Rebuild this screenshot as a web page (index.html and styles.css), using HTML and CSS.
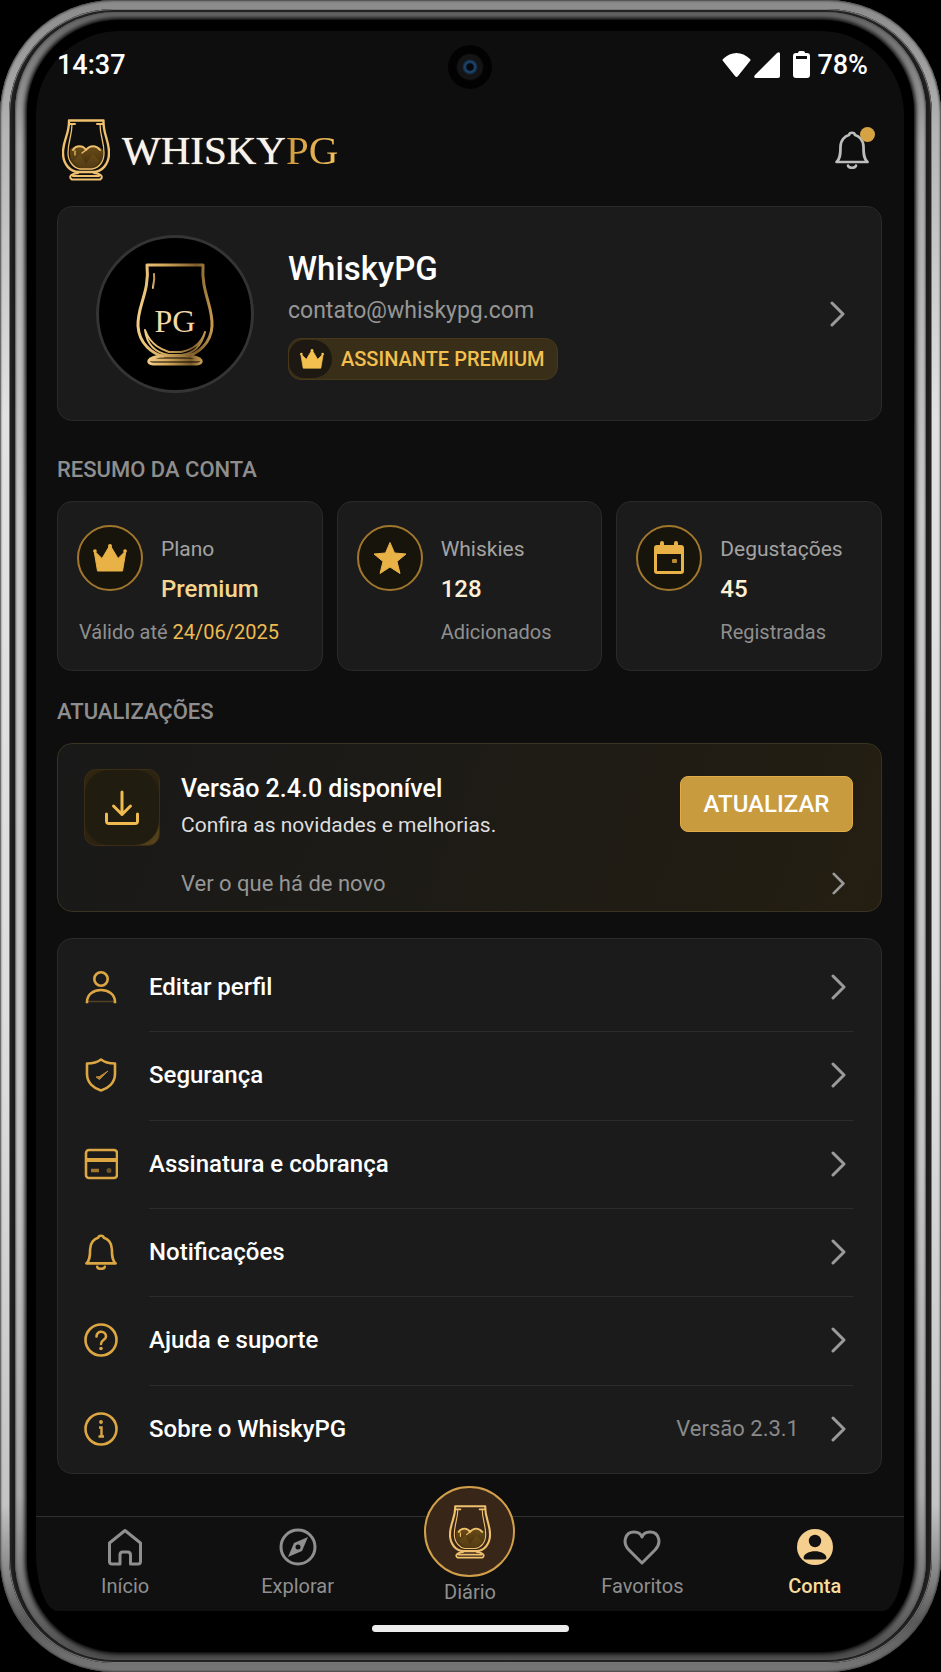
FILE: index.html
```html
<!DOCTYPE html>
<html lang="pt-BR">
<head>
  <meta charset="UTF-8">
  <meta name="viewport" content="width=device-width, initial-scale=1.0">
  <title>WhiskyPG - Conta</title>
  <link rel="stylesheet" href="styles.css">
</head>
<body>
  <!-- Shared icons -->
  <svg class="sprite" aria-hidden="true">
    <defs>
      <linearGradient id="avatar-gold" x1="0" y1="0" x2="1" y2="0">
        <stop offset="0" stop-color="#f3cd86"/>
        <stop offset="0.35" stop-color="#d5a95c"/>
        <stop offset="0.8" stop-color="#7d5c2a"/>
        <stop offset="1" stop-color="#c4984f"/>
      </linearGradient>
      <linearGradient id="liquid" x1="0" y1="0" x2="0" y2="1">
        <stop offset="0" stop-color="#6a4c17"/>
        <stop offset="1" stop-color="#3d2b0c"/>
      </linearGradient>
    </defs>
    <symbol id="i-glass" viewBox="0 0 48 62">
      <path d="M8 31C10 27 20 25 24 31C28 25 38 27 41 31C42 42 37 50 29 51H19C11 50 7 42 8 31Z" fill="url(#liquid)"/>
      <path d="M11 42L18 35L24 45L31 35L38 42L32 49H18Z" fill="#8a6827" opacity="0.25"/>
      <g fill="none" stroke="#efc06e" stroke-linecap="round" stroke-linejoin="round">
        <path d="M7 1.500H41.500C41 15 47 21 47 34C47 45 40 53 31 53H17C8 53 1 45 1 34C1 21 7.500 15 7 1.500Z" stroke-width="2.400"/>
        <path d="M10 5C10 17 6 22 6 34C6 43 12 49 18 50H30C37 49 42 43 42 34C42 22 38 17 38 5" stroke-width="1.300"/>
        <path d="M7 5H13M35 5H41M11 31C14 26 21 26 24 31C28 26 34 26 38 31" stroke-width="2"/>
        <path d="M13 32V36M24 31L20 34" stroke-width="1.300"/>
        <path d="M16 54C7 55 7 59 10 60.500H38C41 59 41 55 32 54M11 57H37" stroke-width="2"/>
      </g>
    </symbol>
    <symbol id="i-chevron" viewBox="0 0 16 26">
      <path d="M2 2L13 13L2 24" fill="none" stroke="currentColor" stroke-width="3" stroke-linecap="round" stroke-linejoin="round"/>
    </symbol>
    <symbol id="i-crown" viewBox="0 0 34 28">
      <path d="M1 6.500L9 14.500L17 1L25 14.500L33 6.500L29.500 27H4.500Z" fill="currentColor" stroke="currentColor" stroke-linejoin="round"/>
      <circle cx="17" cy="2" r="2" fill="currentColor"/>
      <circle cx="2" cy="7" r="1.800" fill="currentColor"/>
      <circle cx="32" cy="7" r="1.800" fill="currentColor"/>
    </symbol>
    <symbol id="i-star" viewBox="0 0 34 34">
      <path d="M17 1.500L21.500 12L33 13L24 20.500L27 32.500L17 26L7 32.500L10 20.500L1 13L12.500 12Z" fill="currentColor" stroke="currentColor" stroke-linejoin="round"/>
    </symbol>
    <symbol id="i-calendar" viewBox="0 0 34 34">
      <path d="M5 4H29A3 3 0 0 1 32 7V30A3 3 0 0 1 29 33H5A3 3 0 0 1 2 30V7A3 3 0 0 1 5 4ZM5 13V30H29V13Z" fill="currentColor" fill-rule="evenodd"/>
      <path d="M10 2V6M24 2V6" stroke="currentColor" stroke-width="4" stroke-linecap="round"/>
      <rect x="20" y="18" width="5" height="4" rx="1" fill="#b98a34"/>
    </symbol>
    <symbol id="i-bell" viewBox="0 0 34 38">
      <path d="M1.500 31C5 28 5.500 24 5.500 16C5.500 9 10 5 14 4C14.500 1 19.500 1 20 4C24 5 28.500 9 28.500 16C28.500 24 29 28 32.500 31Z" fill="none" stroke="currentColor" stroke-width="2.700" stroke-linejoin="round"/>
      <path d="M13 34.500C13.500 37.500 20.500 37.500 21 34.500" fill="none" stroke="currentColor" stroke-width="2.600" stroke-linecap="round"/>
    </symbol>
  </svg>

  <div class="phone">
    <div class="phone-groove">
      <div class="phone-edge">
        <div class="phone-glass">
          <div class="screen">
            <span class="camera"></span>

            <div class="status-bar">
              <span>14:37</span>
              <div class="status-icons">
                <svg width="29" height="26" viewBox="0 0 29 26"><path d="M1 7C9-1 20-1 28 7Q29 8 28 9L16 24Q14.500 26 13 24L1 9Q0 8 1 7Z" fill="#fff"/></svg>
                <svg class="signal" width="26" height="26" viewBox="0 0 26 26"><path d="M23 1Q26-1 26 2V24Q26 26 24 26H2Q-1 26 1 23Z" fill="#fff"/></svg>
                <svg class="battery" width="17" height="27" viewBox="0 0 17 27"><path d="M5 2Q5 0 7 0H10Q12 0 12 2H14Q17 2 17 5V24Q17 27 14 27H3Q0 27 0 24V5Q0 2 3 2ZM3 5V8H14V5Z" fill="#fff" fill-rule="evenodd"/></svg>
                <span>78%</span>
              </div>
            </div>

            <header class="app-header">
              <a class="brand" href="#inicio">
                <svg width="48" height="62"><use href="#i-glass"/></svg>
                <span class="brand-name">WHISKY<span class="brand-gold">PG</span></span>
              </a>
              <button class="bell-button" type="button" aria-label="Notificações">
                <svg width="34" height="38"><use href="#i-bell"/></svg>
                <span class="bell-dot"></span>
              </button>
            </header>

            <main>
              <a class="card profile" href="#perfil">
                <span class="avatar">
                  <svg width="80" height="104" viewBox="0 0 80 104">
                    <g fill="none" stroke="url(#avatar-gold)" stroke-linejoin="round" stroke-linecap="round">
                      <path d="M12 3H68C66 30 78 44 77 64C76 82 62 92 52 94H28C18 92 4 82 3 64C2 44 15 30 12 3Z" stroke-width="3"/>
                      <path d="M10 68C16 84 28 88 34 90H46C56 88 66 82 70 70C66 86 56 92 46 93H34C22 91 12 84 10 68Z" stroke-width="2"/>
                      <path d="M19 12C20 20 18 22 18 26" stroke-width="2"/>
                      <path d="M28 94C10 95 12 102 18 102H62C68 102 70 95 52 94M17 98H63" stroke-width="3"/>
                    </g>
                    <text x="40" y="70" text-anchor="middle" class="avatar-text">PG</text>
                  </svg>
                </span>
                <span class="profile-info">
                  <strong class="profile-name">WhiskyPG</strong>
                  <span class="profile-email">contato@whiskypg.com</span>
                  <span class="badge">
                    <span class="badge-icon"><svg width="24" height="20"><use href="#i-crown"/></svg></span>
                    ASSINANTE PREMIUM
                  </span>
                </span>
                <svg class="chevron" width="16" height="26"><use href="#i-chevron"/></svg>
              </a>

              <h2 class="section-title section-title-first">RESUMO DA CONTA</h2>
              <section class="stats">
                <div class="card stat">
                  <span class="stat-icon"><svg width="34" height="28"><use href="#i-crown"/></svg></span>
                  <div class="stat-text">
                    <span class="stat-label">Plano</span>
                    <strong class="stat-value stat-value-gold">Premium</strong>
                  </div>
                  <p class="stat-note stat-note-wide">Válido até <span class="stat-date">24/06/2025</span></p>
                </div>
                <div class="card stat">
                  <span class="stat-icon"><svg width="34" height="34"><use href="#i-star"/></svg></span>
                  <div class="stat-text">
                    <span class="stat-label">Whiskies</span>
                    <strong class="stat-value">128</strong>
                  </div>
                  <p class="stat-note">Adicionados</p>
                </div>
                <div class="card stat">
                  <span class="stat-icon"><svg width="34" height="34"><use href="#i-calendar"/></svg></span>
                  <div class="stat-text">
                    <span class="stat-label">Degustações</span>
                    <strong class="stat-value">45</strong>
                  </div>
                  <p class="stat-note">Registradas</p>
                </div>
              </section>

              <h2 class="section-title">ATUALIZAÇÕES</h2>
              <section class="card update">
                <span class="update-icon">
                  <svg viewBox="0 0 34 34"><path d="M17 1.500V24M8.500 15.500L17 24L25.500 15.500M1.500 23.500V33H32.500V23.500" fill="none" stroke="#efba50" stroke-width="3" stroke-linejoin="round" stroke-linecap="round"/></svg>
                </span>
                <div class="update-text">
                  <h3>Versão 2.4.0 disponível</h3>
                  <p>Confira as novidades e melhorias.</p>
                </div>
                <button class="update-button" type="button">ATUALIZAR</button>
                <a class="update-link" href="#novidades">
                  Ver o que há de novo
                  <svg class="chevron" width="14" height="23"><use href="#i-chevron"/></svg>
                </a>
              </section>

              <ul class="card menu">
                <li>
                  <a href="#editar">
                    <svg class="menu-icon" width="34" height="34" viewBox="0 0 34 34"><g fill="none" stroke="currentColor" stroke-width="2.600"><circle cx="17" cy="9" r="6.700"/><path d="M3 32C3 16 31 16 31 32" stroke-linecap="square"/><path d="M4 31.500H30" stroke-width="1.500" opacity="0.300"/></g></svg>
                    <span class="menu-label">Editar perfil</span>
                    <svg class="chevron" width="16" height="26"><use href="#i-chevron"/></svg>
                  </a>
                </li>
                <li>
                  <a href="#seguranca">
                    <svg class="menu-icon" width="34" height="34" viewBox="0 0 34 34"><path d="M17 1.500Q22 5.500 31 5.500V16C31 25 24 30.500 17 32.500C10 30.500 3 25 3 16V5.500Q12 5.500 17 1.500Z" fill="none" stroke="currentColor" stroke-width="2.600" stroke-linejoin="round"/><path d="M12 19L15.500 21.500L24 13L15.500 18.500Z" fill="#b98a34" stroke="#b98a34" stroke-linejoin="round"/></svg>
                    <span class="menu-label">Segurança</span>
                    <svg class="chevron" width="16" height="26"><use href="#i-chevron"/></svg>
                  </a>
                </li>
                <li>
                  <a href="#assinatura">
                    <svg class="menu-icon" width="34" height="34" viewBox="0 0 34 34"><rect x="2" y="3" width="31" height="28" rx="3" fill="none" stroke="currentColor" stroke-width="2.600"/><path d="M2 13H33" stroke="currentColor" stroke-width="4"/><path d="M7 23.500H15" stroke="#a1772c" stroke-width="3.500"/><circle cx="25" cy="23.500" r="2.500" fill="#6f5425"/></svg>
                    <span class="menu-label">Assinatura e cobrança</span>
                    <svg class="chevron" width="16" height="26"><use href="#i-chevron"/></svg>
                  </a>
                </li>
                <li>
                  <a href="#notificacoes">
                    <svg class="menu-icon" width="34" height="36"><use href="#i-bell"/></svg>
                    <span class="menu-label">Notificações</span>
                    <svg class="chevron" width="16" height="26"><use href="#i-chevron"/></svg>
                  </a>
                </li>
                <li>
                  <a href="#ajuda">
                    <svg class="menu-icon" width="34" height="34" viewBox="0 0 34 34"><g fill="none" stroke="currentColor" stroke-width="2.600"><circle cx="17" cy="17" r="15.500"/><path d="M12.500 13.500C12.500 7 22 7.500 22 13.500C22 17 17 16.500 17 21" stroke-linecap="round"/></g><circle cx="17" cy="25.500" r="1.800" fill="currentColor"/></svg>
                    <span class="menu-label">Ajuda e suporte</span>
                    <svg class="chevron" width="16" height="26"><use href="#i-chevron"/></svg>
                  </a>
                </li>
                <li>
                  <a href="#sobre">
                    <svg class="menu-icon" width="34" height="34" viewBox="0 0 34 34"><circle cx="17" cy="17" r="15.500" fill="none" stroke="currentColor" stroke-width="2.600"/><circle cx="17" cy="10" r="1.900" fill="currentColor"/><path d="M15 15.500H17.500V24.500M14.500 24.500H20" fill="none" stroke="currentColor" stroke-width="2.400"/></svg>
                    <span class="menu-label">Sobre o WhiskyPG</span>
                    <span class="menu-version">Versão 2.3.1</span>
                    <svg class="chevron" width="16" height="26"><use href="#i-chevron"/></svg>
                  </a>
                </li>
              </ul>
            </main>

            <nav class="tab-bar">
              <a href="#inicio">
                <svg width="36" height="38" viewBox="0 0 36 38"><path d="M2.500 15L18 2.500L33.500 15V33.500Q33.500 36 31 36H23.500V27Q23.500 24 20.500 24H15.500Q13 24 13 27V36H5Q2.500 36 2.500 33.500Z" fill="none" stroke="currentColor" stroke-width="3" stroke-linejoin="round"/></svg>
                Início
              </a>
              <a href="#explorar">
                <svg width="38" height="38" viewBox="0 0 38 38"><circle cx="19" cy="19" r="17" fill="none" stroke="currentColor" stroke-width="3"/><path d="M29 9L23 23L9 29L15 15Z" fill="currentColor"/><circle cx="19" cy="19" r="2.500" fill="#111"/></svg>
                Explorar
              </a>
              <a class="tab-main" href="#diario">
                <span class="tab-main-icon"><svg width="42" height="54"><use href="#i-glass"/></svg></span>
                Diário
              </a>
              <a href="#favoritos">
                <svg width="38" height="38" viewBox="0 0 38 38"><path d="M19 35L6 22C-1 15 2 4 11 4C15 4 18 6 19 9C20 6 23 4 27 4C36 4 39 15 32 22Z" fill="none" stroke="currentColor" stroke-width="3" stroke-linejoin="round"/></svg>
                Favoritos
              </a>
              <a class="active" href="#conta">
                <svg width="38" height="38" viewBox="0 0 38 38"><circle cx="19" cy="19" r="18" fill="#f5cf8e"/><circle cx="19" cy="13" r="6.200" fill="#111"/><path d="M7.500 30C8 21 30 21 30.500 30Q30 31.500 28 31.500H10Q8 31.500 7.500 30Z" fill="#111"/></svg>
                Conta
              </a>
            </nav>
          </div>
          <div class="home-area"><span class="home-bar"></span></div>
        </div>
      </div>
    </div>
  </div>
</body>
</html>
```
FILE: styles.css
```css
* {
  box-sizing: border-box;
}
body {
  margin: 0;
  background: #000;
  color: #fff;
  font-family: Roboto, "Liberation Sans", sans-serif;
}
a {
  color: inherit;
  text-decoration: none;
}
button {
  font-family: inherit;
  border: none;
  padding: 0;
  cursor: pointer;
}
svg {
  display: block;
  flex: none;
}
h2, h3, p, ul {
  margin: 0;
  padding: 0;
}
.sprite {
  position: absolute;
  width: 0;
  height: 0;
}

/* Phone body */
.phone {
  padding: 9px;
  border-radius: 114px;
  background: linear-gradient(180deg, #8a8a8a 0%, #b5b5b5 8%, #e2e2e2 25%, #dcdcdc 65%, #c4c4c4 90%, #5a5a5a 97%, #777 100%);
  box-shadow: inset 0 0 2px 1px #444;
}
.phone-groove {
  padding: 3px 6px;
  border-radius: 105px;
  background: #1c1c1c;
  box-shadow: inset 0 0 0 1px #777, inset 0 0 0 3px #222;
}
.phone-edge {
  padding: 8px 12px;
  border-radius: 100px;
  background: linear-gradient(180deg, #666 0%, #a8a8a8 8%, #c8c8c8 30%, #c4c4c4 70%, #a8a8a8 90%, #4c4c4c 100%);
  box-shadow: inset 0 0 2px 1px #555;
}
.phone-glass {
  padding: 11px 10px 0 9px;
  border-radius: 92px;
  background: #000;
  box-shadow: 0 0 4px 2px #000;
}
.screen {
  position: relative;
  border-radius: 84px 84px 22px 22px / 84px 84px 60px 60px;
  background: #0e0e0e;
  overflow: hidden;
}
.camera {
  position: absolute;
  top: 14px;
  left: 50%;
  width: 44px;
  height: 44px;
  margin-left: -22px;
  border-radius: 50%;
  background: radial-gradient(circle, #05080c 3px, #1f4a75 5px, #12283d 7px, #131313 8px, #151515 12px, #020202 14px);
}

/* Status bar */
.status-bar {
  display: flex;
  justify-content: space-between;
  align-items: center;
  height: 66px;
  padding: 1px 36px 0 21px;
  font-size: 27px;
  font-weight: 500;
}
.status-icons {
  display: flex;
  align-items: center;
}
.signal {
  margin-left: 3px;
}
.battery {
  margin: 0 7px 0 13px;
}

/* Header */
.app-header {
  display: flex;
  justify-content: space-between;
  align-items: center;
  height: 109px;
  padding: 0 35px 4px 26px;
}
.brand {
  display: flex;
  align-items: center;
  gap: 12px;
}
.brand-name {
  font-family: "Liberation Serif", serif;
  font-size: 41px;
  line-height: 48px;
  color: #f8f3ea;
  text-shadow: 0 0 1px #f8f3ea;
}
.brand-gold {
  background: linear-gradient(90deg, #d09a3e, #f3c15d);
  -webkit-background-clip: text;
  background-clip: text;
  color: transparent;
  text-shadow: none;
}
.bell-button {
  position: relative;
  background: none;
  color: #bdbdbd;
}
.bell-dot {
  position: absolute;
  top: -4px;
  right: -6px;
  width: 15px;
  height: 15px;
  border-radius: 50%;
  background: #d5a344;
}

main {
  padding: 0 22px 0 21px;
}
.card {
  border: 1px solid #2a2a2a;
  border-radius: 15px;
  background: #1b1b1b;
}
.chevron {
  color: #9a9a9a;
}

/* Profile */
.profile {
  display: flex;
  align-items: center;
  height: 215px;
  padding: 0 35px 0 38px;
}
.avatar {
  display: flex;
  justify-content: center;
  align-items: center;
  flex: none;
  width: 158px;
  height: 158px;
  border: 3px solid #343434;
  border-radius: 50%;
  background: #000;
}
.avatar-text {
  font-family: "Liberation Serif", serif;
  font-size: 32px;
  fill: #f3d9a6;
}
.profile-info {
  display: flex;
  flex-direction: column;
  align-items: flex-start;
  flex: 1;
  margin-left: 34px;
  padding-top: 2px;
}
.profile-name {
  font-size: 33px;
  font-weight: 500;
  line-height: 40px;
}
.profile-email {
  margin-top: 6px;
  font-size: 23px;
  line-height: 32px;
  color: #969696;
}
.badge {
  display: flex;
  align-items: center;
  gap: 9px;
  height: 42px;
  margin-top: 11px;
  padding-right: 12px;
  border: 1px solid #48381a;
  border-radius: 13px;
  background: #392e18;
  color: #f3c04f;
  font-size: 20px;
  font-weight: 500;
}
.badge-icon {
  display: flex;
  justify-content: center;
  align-items: center;
  width: 43px;
  height: 38px;
  padding-left: 2px;
  border-radius: 16px 20px 20px 16px;
  background: #1d1912;
}

/* Account summary */
.section-title {
  margin: 28px 0 18px;
  font-size: 22px;
  font-weight: 500;
  line-height: 26px;
  color: #8e8e8e;
}
.section-title-first {
  margin-top: 36px;
}
.stats {
  display: grid;
  grid-template-columns: repeat(3, 1fr);
  gap: 14px;
}
.stat {
  display: grid;
  grid-template-columns: 66px 1fr;
  column-gap: 18px;
  align-content: start;
  height: 170px;
  padding: 23px 0 0 19px;
}
.stat-icon {
  display: flex;
  justify-content: center;
  align-items: center;
  width: 66px;
  height: 66px;
  border: 2px solid #a1772d;
  border-radius: 50%;
  background: #17140b;
  color: #e9b247;
}
.stat-text {
  display: flex;
  flex-direction: column;
  padding-top: 9px;
}
.stat-label {
  font-size: 21px;
  line-height: 30px;
  color: #a3a3a3;
}
.stat-value {
  margin-top: 8px;
  font-size: 24px;
  font-weight: 500;
  line-height: 34px;
  color: #fdf0d5;
}
.stat-value-gold {
  color: #f6d590;
}
.stat-note {
  grid-column: 2;
  margin-top: 14px;
  font-size: 20px;
  line-height: 24px;
  color: #8f8f8f;
}
.stat-note-wide {
  grid-column: 1 / 3;
  padding-left: 2px;
}
.stat-date {
  color: #edbb50;
}

/* Update card */
.update {
  display: grid;
  grid-template-columns: 76px 1fr auto;
  column-gap: 21px;
  align-content: start;
  height: 169px;
  padding: 25px 28px 0 26px;
  border-color: #3a3222;
  background: linear-gradient(110deg, #191919 0%, #1d1b16 45%, #241e12 100%);
}
.update-icon {
  height: 77px;
  border: 1px solid #3a2d14;
  border-radius: 12px;
  background: linear-gradient(135deg, #30260f 0%, #2b2210 60%, #5c481c 100%);
}
.update-icon svg {
  width: 100%;
  height: 100%;
  padding: 20px;
  border-radius: 24px;
  background: #211c10;
}
.update-text {
  padding-top: 4px;
}
.update-text h3 {
  font-size: 25px;
  font-weight: 500;
  line-height: 32px;
}
.update-text p {
  margin-top: 4px;
  font-size: 21px;
  line-height: 32px;
  color: #dedede;
}
.update-button {
  width: 173px;
  height: 56px;
  margin-top: 7px;
  border: 1px solid #e0ac46;
  border-radius: 8px;
  background: #c99b3f;
  color: #fff;
  font-size: 24px;
  font-weight: 500;
}
.update-link {
  grid-column: 2 / 4;
  display: flex;
  justify-content: space-between;
  align-items: center;
  height: 30px;
  margin-top: 22px;
  padding-right: 7px;
  font-size: 22px;
  color: #969696;
}

/* Menu */
.menu {
  display: grid;
  grid-auto-rows: 1fr;
  min-height: 536px;
  margin-top: 26px;
  padding: 4px 28px 0 26px;
  list-style: none;
}
.menu a {
  display: flex;
  align-items: center;
  height: 100%;
  padding-right: 6px;
}
.menu li + li {
  background: linear-gradient(#2c2c2c, #2c2c2c) 65px 0 / 100% 1px no-repeat;
}
.menu-icon {
  color: #dca743;
}
.menu-label {
  flex: 1;
  margin-left: 31px;
  font-size: 24px;
  font-weight: 500;
}
.menu-version {
  margin-right: 32px;
  font-size: 22px;
  color: #8a8a8a;
}

/* Bottom tabs */
.tab-bar {
  display: grid;
  grid-template-columns: repeat(5, 1fr);
  height: 95px;
  margin-top: 42px;
  padding: 0 3px;
  border-top: 1px solid #303030;
  background: #101010;
  font-size: 20px;
  line-height: 24px;
  color: #8f8f8f;
}
.tab-bar a {
  display: flex;
  flex-direction: column;
  align-items: center;
  gap: 8px;
  padding-top: 11px;
}
.tab-bar .tab-main {
  gap: 3px;
  margin-top: -31px;
  padding-top: 0;
}
.tab-main-icon {
  display: flex;
  justify-content: center;
  align-items: center;
  width: 91px;
  height: 91px;
  border: 2px solid #d2a04a;
  border-radius: 50%;
  background: #382619;
}
.tab-bar .active {
  color: #f8dc9c;
  font-weight: 500;
}
.home-area {
  display: flex;
  justify-content: center;
  height: 41px;
  padding-top: 14px;
}
.home-bar {
  width: 197px;
  height: 7px;
  border-radius: 4px;
  background: #ececec;
}
```
